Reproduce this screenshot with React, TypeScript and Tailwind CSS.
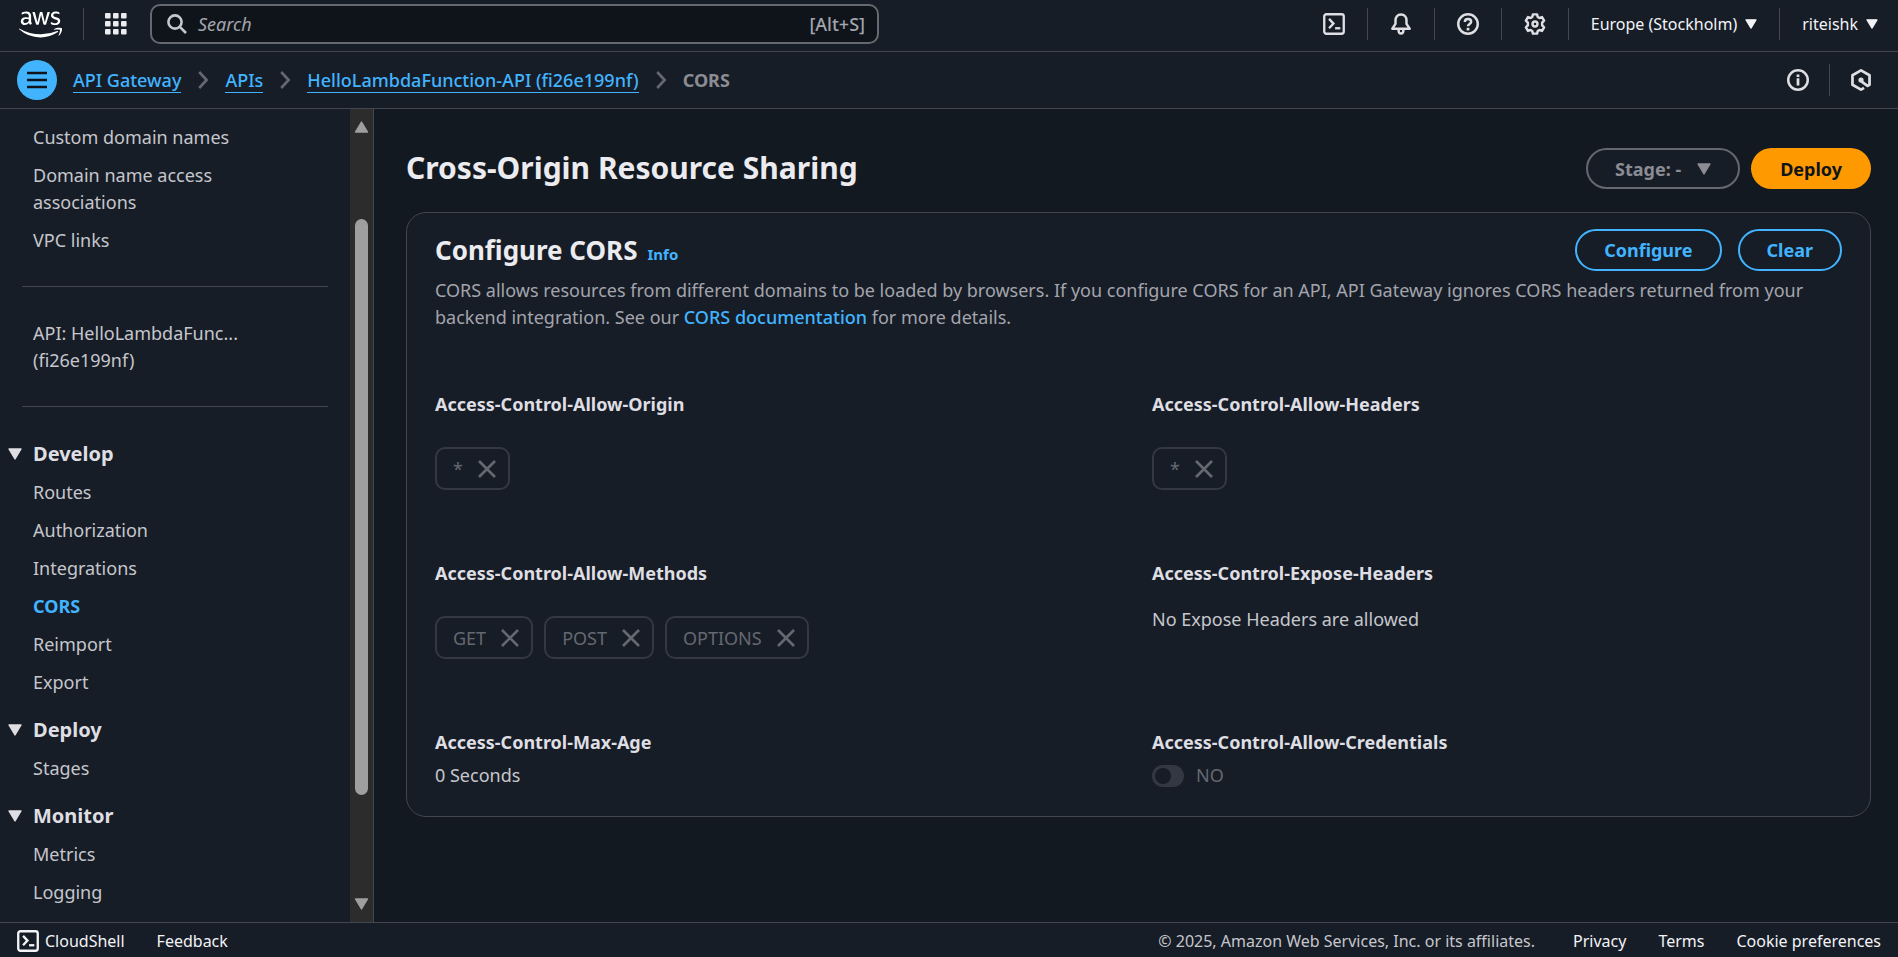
import { Fragment } from "react";
import type { ReactNode } from "react";
import { FaAws } from "react-icons/fa";

function Triangle({ className, up = false }: { className: string; up?: boolean }) {
  return (
    <svg viewBox="0 0 14 12" className={className} aria-hidden="true">
      <path
        d={up ? "M1 11h12L7 1z" : "M1 1h12L7 11z"}
        fill="currentColor"
        stroke="currentColor"
        strokeWidth="1.4"
        strokeLinejoin="round"
      />
    </svg>
  );
}

function Icon({ children }: { children: ReactNode }) {
  return (
    <svg
      viewBox="0 0 16 16"
      className="size-[22px]"
      fill="none"
      stroke="currentColor"
      strokeWidth="2"
      aria-hidden="true"
    >
      {children}
    </svg>
  );
}

function TerminalIcon() {
  return (
    <Icon>
      <rect x="0.9" y="0.9" width="14.2" height="14.2" rx="1.6" strokeWidth="1.7" />
      <path d="M4.4 4.3 7.6 7.7 4.4 11.1" strokeWidth="1.7" />
      <path d="M8.8 11.1h3.8" strokeWidth="1.7" />
    </Icon>
  );
}

function BellIcon() {
  return (
    <Icon>
      <path
        d="M8 1.1C5.4 1.1 4 3 4 5.300v2.600L1.700 11.400h12.600L12 7.900V5.300C12 3 10.600 1.100 8 1.100Z"
        strokeLinejoin="round"
        strokeWidth="1.8"
      />
      <path d="M6.200 12c0 1.900.6 2.900 1.800 2.900s1.800-1 1.800-2.900" strokeWidth="1.8" />
    </Icon>
  );
}

function HelpIcon() {
  return (
    <Icon>
      <circle cx="8" cy="8" r="7.100" strokeWidth="1.8" />
      <path d="M5.7 6.500C5.700 5 6.700 4.300 8 4.300s2.300.8 2.300 2C10.300 7.900 8 8 8 9.600" strokeWidth="1.8" />
      <path d="M8 10.800v1.900" />
    </Icon>
  );
}

function GearIcon() {
  return (
    <Icon>
      <path
        d="M6.5 1h3l.5 1.9 1.2.7 1.9-.6 1.5 2.6L13.2 7v2l1.4 1.4-1.5 2.6-1.9-.6-1.2.7-.5 1.900h-3L6 13.100l-1.200-.7-1.900.6-1.500-2.600L2.800 9V7L1.400 5.600 2.900 3l1.900.6L6 2.900z"
        strokeLinejoin="round"
        strokeWidth="1.8"
      />
      <circle cx="8" cy="8" r="1.800" strokeWidth="1.8" />
    </Icon>
  );
}

function InfoIcon() {
  return (
    <Icon>
      <circle cx="8" cy="8" r="7.100" strokeWidth="1.8" />
      <path d="M8 6.800v5.200M8 4v1.800" />
    </Icon>
  );
}

function HexIcon() {
  return (
    <Icon>
      <path
        d="M10.200 13.700 8 15 1.800 11.500v-7L8 1l6.200 3.500v7l-1.400.8L8.200 9"
        strokeLinejoin="round"
      />
      <circle cx="8" cy="8" r="1.400" fill="currentColor" strokeWidth="1" />
    </Icon>
  );
}

function CloseIcon() {
  return (
    <svg viewBox="0 0 18 18" className="size-[18px]" fill="none" stroke="currentColor" strokeWidth="2.6" aria-hidden="true">
      <path d="M1 1l16 16M17 1 1 17" />
    </svg>
  );
}

function Chevron() {
  return (
    <svg viewBox="0 0 10 18" className="h-[18px] w-[10px] text-[#656871]" fill="none" stroke="currentColor" strokeWidth="2.6" aria-hidden="true">
      <path d="M1.2 1 8.6 9l-7.400 8" />
    </svg>
  );
}

function Divider() {
  return <span className="h-8 w-px shrink-0 bg-[#424650]" />;
}

function TopBar() {
  return (
    <header className="flex h-13 shrink-0 items-center border-b border-[#424650] px-4 pb-[3px]">
      <a href="#home" aria-label="AWS home" className="flex w-12 justify-center text-white">
        <FaAws className="size-[43px]" />
      </a>
      <span className="ml-[19px] h-8 w-px bg-[#424650]" />
      <button type="button" aria-label="Services" className="ml-[21px] text-[#ebebf0]">
        <svg viewBox="0 0 22 22" className="size-[22px]" fill="currentColor" aria-hidden="true">
          {[0, 8, 16].map((y) =>
            [0, 8, 16].map((x) => <rect key={`${x}-${y}`} x={x} y={y} width="5.6" height="5.6" rx="1" />),
          )}
        </svg>
      </button>
      <label className="ml-[23px] flex h-10 w-[729px] items-center gap-[11px] rounded-[10px] border-2 border-[#656871] bg-[#0f141a] px-3">
        <svg viewBox="0 0 20 20" className="ml-[3px] size-5 shrink-0 text-[#c6c6cd]" fill="none" stroke="currentColor" strokeWidth="2.6" aria-hidden="true">
          <circle cx="8" cy="8" r="6.6" />
          <path d="m12.8 12.8 6.2 6.2" />
        </svg>
        <input
          type="search"
          aria-label="Search"
          placeholder="Search"
          className="min-w-0 flex-1 bg-transparent text-lg text-[#c6c6cd] italic outline-none placeholder:text-[#a4a4ad]"
        />
        <span className="text-lg font-medium text-[#a4a4ad]">[Alt+S]</span>
      </label>
      <div className="ml-auto flex items-center gap-[22px] text-[#dedee3]">
        <button type="button" aria-label="CloudShell"><TerminalIcon /></button>
        <Divider />
        <button type="button" aria-label="Notifications"><BellIcon /></button>
        <Divider />
        <button type="button" aria-label="Help"><HelpIcon /></button>
        <Divider />
        <button type="button" aria-label="Settings"><GearIcon /></button>
        <Divider />
        <button type="button" className="flex items-center gap-2 text-base text-[#f3f3f7]">
          Europe (Stockholm)
          <Triangle className="h-[10px] w-3" />
        </button>
        <Divider />
        <button type="button" className="mr-1 flex items-center gap-2 text-base text-[#f3f3f7]">
          riteishk
          <Triangle className="h-[10px] w-3" />
        </button>
      </div>
    </header>
  );
}

function BreadcrumbBar() {
  const crumbs = ["API Gateway", "APIs", "HelloLambdaFunction-API (fi26e199nf)"];
  return (
    <div className="flex h-[57px] shrink-0 items-center border-b border-[#424650] px-[17px]">
      <button
        type="button"
        aria-label="Toggle navigation"
        className="flex size-10 items-center justify-center rounded-full bg-[#42b4ff] text-[#0f141a]"
      >
        <svg viewBox="0 0 20 18" className="h-[18px] w-5" stroke="currentColor" strokeWidth="2.4" aria-hidden="true">
          <path d="M0 2h20M0 9h20M0 16h20" />
        </svg>
      </button>
      <nav aria-label="Breadcrumbs" className="ml-4 flex items-center gap-[17px] text-lg leading-6">
        {crumbs.map((label) => (
          <Fragment key={label}>
            <a href="#crumb" className="border-b border-[#42b4ff] font-medium text-[#42b4ff]">{label}</a>
            <Chevron />
          </Fragment>
        ))}
        <span className="font-bold text-[#8c8c94]">CORS</span>
      </nav>
      <div className="ml-auto flex items-center gap-5 pr-[9px] text-[#dedee3]">
        <button type="button" aria-label="Info"><InfoIcon /></button>
        <Divider />
        <button type="button" aria-label="Amazon Q"><HexIcon /></button>
      </div>
    </div>
  );
}

const sections = [
  { title: "Develop", items: ["Routes", "Authorization", "Integrations", "CORS", "Reimport", "Export"] },
  { title: "Deploy", items: ["Stages"] },
  { title: "Monitor", items: ["Metrics", "Logging"] },
];

function Sidebar() {
  return (
    <aside className="flex w-[374px] shrink-0 border-r border-[#424650] bg-[#161d26]">
      <nav aria-label="API Gateway" className="min-h-0 flex-1 overflow-hidden pt-[15px] text-lg leading-[27px] text-[#c6c6cd]">
        <ul className="flex flex-col gap-[11px] pr-20 pl-[33px]">
          <li><a href="#domains">Custom domain names</a></li>
          <li><a href="#access">Domain name access associations</a></li>
          <li><a href="#vpc">VPC links</a></li>
        </ul>
        <hr className="mx-[22px] mt-8 mb-[33px] border-[#424650]" />
        <p className="pl-[33px]">
          API: HelloLambdaFunc...
          <br />
          (fi26e199nf)
        </p>
        <hr className="mx-[22px] mt-8 mb-[33px] border-[#424650]" />
        <div className="flex flex-col gap-5">
          {sections.map((section) => (
            <section key={section.title}>
              <h3 className="text-xl leading-7 font-bold text-[#dedee3]">
                <button type="button" className="flex items-center gap-[11px] pl-2">
                  <Triangle className="h-3 w-[14px]" />
                  {section.title}
                </button>
              </h3>
              <ul className="mt-[11px] flex flex-col gap-[11px] pl-[33px]">
                {section.items.map((item) => (
                  <li key={item}>
                    <a href="#nav" className={item === "CORS" ? "font-bold text-[#42b4ff]" : ""}>{item}</a>
                  </li>
                ))}
              </ul>
            </section>
          ))}
        </div>
      </nav>
      <div className="flex w-[23px] shrink-0 flex-col items-center bg-[#2c2c2c] py-3 text-[#9f9f9f]">
        <Triangle up className="h-3 w-[15px]" />
        <div className="flex min-h-0 w-[13px] flex-1 flex-col pt-[86px] pb-[103px]">
          <div className="flex-1 rounded-full bg-[#9f9f9f]" />
        </div>
        <Triangle className="h-3 w-[15px]" />
      </div>
    </aside>
  );
}

function Chips({ values }: { values: string[] }) {
  return (
    <ul className="mt-[29px] flex gap-[11px]">
      {values.map((value) => (
        <li
          key={value}
          className="flex h-[43px] items-center gap-[15px] rounded-[10px] border-2 border-[#333843] pr-3 pl-4 text-lg text-[#656871]"
        >
          {value}
          <button type="button" disabled aria-label={`Remove ${value}`}><CloseIcon /></button>
        </li>
      ))}
    </ul>
  );
}

function Field({ label, children }: { label: string; children: ReactNode }) {
  return (
    <div className="text-lg leading-[27px] text-[#c6c6cd]">
      <h3 className="font-bold text-[#dedee3]">{label}</h3>
      {children}
    </div>
  );
}

function Content() {
  return (
    <main className="min-w-0 flex-1 bg-[#131920] px-[27px] pt-[39px] pl-8">
      <div className="flex items-start justify-between">
        <h1 className="text-3xl leading-[39px] font-bold text-[#ebebf0]">Cross-Origin Resource Sharing</h1>
        <div className="flex gap-[11px] text-lg font-bold">
          <button type="button" disabled className="flex h-[41px] items-center gap-4 rounded-full border-2 border-[#656871] bg-[#161d26] px-[27px] text-[#8c8c94]">
            Stage: -
            <Triangle className="h-3 w-[14px]" />
          </button>
          <button type="button" className="h-[41px] rounded-full bg-[#ff9900] px-[29px] text-[#0f141a]">Deploy</button>
        </div>
      </div>
      <section className="mt-[23px] rounded-[20px] border border-[#424650] bg-[#161d26] px-7 pt-4 pb-[27px]">
        <div className="flex items-center justify-between">
          <div className="flex items-baseline gap-[10px]">
            <h2 className="text-[26px] leading-8 font-bold text-[#ebebf0]">Configure CORS</h2>
            <a href="#info" className="text-[15px] font-bold text-[#42b4ff]">Info</a>
          </div>
          <div className="flex gap-4 text-lg font-bold text-[#42b4ff]">
            <button type="button" className="h-[42px] rounded-full border-2 border-[#42b4ff] px-[27px]">Configure</button>
            <button type="button" className="h-[42px] rounded-full border-2 border-[#42b4ff] px-[27px]">Clear</button>
          </div>
        </div>
        <p className="mt-[6px] text-lg leading-[27px] text-[#a4a4ad]">
          CORS allows resources from different domains to be loaded by browsers. If you configure CORS for an API, API
          Gateway ignores CORS headers returned from your backend integration. See our{" "}
          <a href="#docs" className="font-medium text-[#42b4ff]">CORS documentation</a> for more details.
        </p>
        <div className="mt-[60px] grid grid-cols-2 gap-x-[27px] gap-y-[70px]">
          <Field label="Access-Control-Allow-Origin"><Chips values={["*"]} /></Field>
          <Field label="Access-Control-Allow-Headers"><Chips values={["*"]} /></Field>
          <Field label="Access-Control-Allow-Methods"><Chips values={["GET", "POST", "OPTIONS"]} /></Field>
          <Field label="Access-Control-Expose-Headers"><p className="mt-[19px]">No Expose Headers are allowed</p></Field>
          <Field label="Access-Control-Max-Age"><p className="mt-[6px]">0 Seconds</p></Field>
          <Field label="Access-Control-Allow-Credentials">
            <label className="mt-[6px] flex items-center gap-3 text-[#656871]">
              <input
                type="checkbox"
                role="switch"
                disabled
                className="flex h-[22px] w-8 appearance-none items-center rounded-full bg-[#333843] px-[3px] before:size-4 before:rounded-full before:bg-[#161d26]"
              />
              NO
            </label>
          </Field>
        </div>
      </section>
    </main>
  );
}

function Footer() {
  return (
    <footer className="flex h-[35px] shrink-0 items-center border-t border-[#424650] px-[17px] pt-[2px] text-base text-[#f3f3f7]">
      <button type="button" className="flex items-center gap-[6px]">
        <TerminalIcon />
        CloudShell
      </button>
      <a href="#feedback" className="ml-8">Feedback</a>
      <div className="ml-auto flex items-center">
        <span className="text-[#c6c6cd]">© 2025, Amazon Web Services, Inc. or its affiliates.</span>
        <a href="#privacy" className="ml-[38px]">Privacy</a>
        <a href="#terms" className="ml-8">Terms</a>
        <a href="#cookies" className="ml-8">Cookie preferences</a>
      </div>
    </footer>
  );
}

export default function App() {
  return (
    <div className="flex h-screen flex-col overflow-hidden bg-[#161d26] font-['Noto_Sans','Open_Sans',sans-serif]">
      <TopBar />
      <BreadcrumbBar />
      <div className="flex min-h-0 flex-1">
        <Sidebar />
        <Content />
      </div>
      <Footer />
    </div>
  );
}
